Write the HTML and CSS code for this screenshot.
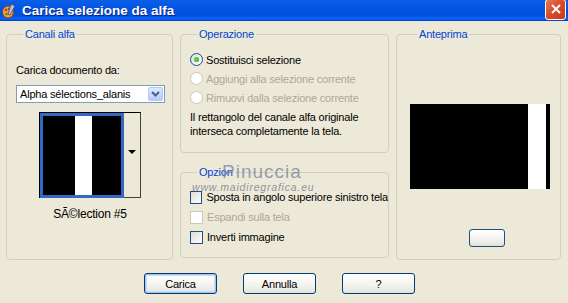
FILE: index.html
```html
<!DOCTYPE html>
<html>
<head>
    <title>Carica selezione da alfa</title>
    <link rel="stylesheet" href="styles.css">
</head>
<body>
<div class="window">
    <div class="titlebar">
        <svg class="app-icon" width="14" height="16" viewBox="0 0 14 16">
            <ellipse cx="6" cy="9" rx="5.5" ry="6" fill="#f0a040" stroke="#8a4a10" stroke-width="1"/>
            <circle cx="4" cy="7" r="1.3" fill="#e03020"/>
            <circle cx="7" cy="6" r="1.3" fill="#3060e0"/>
            <circle cx="4.5" cy="11" r="1.3" fill="#30a030"/>
            <path d="M9 1 L13 3 L8 12 L6 11 Z" fill="#c0c0d0" stroke="#404060" stroke-width="0.8"/>
        </svg>
        <span class="title">Carica selezione da alfa</span>
        <div class="close">
            <svg width="12" height="12" viewBox="0 0 12 12"><path d="M2 2 L10 10 M10 2 L2 10" stroke="#fff" stroke-width="2"/></svg>
        </div>
    </div>

    <div class="content">
        <div class="groups">
            <fieldset class="group canali">
                <legend>Canali alfa</legend>
                <div class="lbl">Carica documento da:</div>
                <div class="combo">
                    <span class="combo-text">Alpha sélections_alanis</span>
                    <span class="combo-btn">
                        <svg width="9" height="6" viewBox="0 0 9 6"><path d="M1 1 L4.5 4.5 L8 1" fill="none" stroke="#4d6185" stroke-width="2"/></svg>
                    </span>
                </div>
                <div class="thumb-wrap">
                    <div class="thumb">
                        <div class="thumb-img"><span class="stripe"></span></div>
                        <div class="thumb-arrow"><span class="tri"></span></div>
                    </div>
                    <div class="caption">SÃ©lection #5</div>
                </div>
            </fieldset>

            <div class="mid">
                <fieldset class="group operazione">
                    <legend>Operazione</legend>
                    <div class="row"><span class="radio on"></span>Sostituisci selezione</div>
                    <div class="row disabled"><span class="radio"></span>Aggiungi alla selezione corrente</div>
                    <div class="row disabled"><span class="radio"></span>Rimuovi dalla selezione corrente</div>
                    <p class="desc">Il rettangolo del canale alfa originale interseca completamente la tela.</p>
                </fieldset>
                <fieldset class="group opzioni">
                    <legend>Opzion</legend>
                    <div class="row"><span class="check"></span>Sposta in angolo superiore sinistro tela</div>
                    <div class="row disabled"><span class="check"></span>Espandi sulla tela</div>
                    <div class="row"><span class="check"></span>Inverti immagine</div>
                    <div class="wm-name">Pinuccia</div>
                    <div class="wm-url">www.maidiregrafica.eu</div>
                </fieldset>
            </div>

            <fieldset class="group anteprima">
                <legend>Anteprima</legend>
                <div class="preview"><span class="stripe"></span></div>
                <div class="zoom-btn"></div>
            </fieldset>
        </div>

        <div class="buttons">
            <button class="btn default">Carica</button>
            <button class="btn">Annulla</button>
            <button class="btn">?</button>
        </div>
    </div>
</div>
</body>
</html>
```

FILE: styles.css
```css
/* Finestra stile XP */
body {
    margin: 0;
    background: #ece9d8;
    font-family: "Liberation Sans", Arial, sans-serif;
    font-size: 11px;
    letter-spacing: -0.2px;
    color: #000;
}

.window {
    width: 568px;
    height: 303px;
    overflow: hidden;
}

.titlebar {
    height: 21px;
    display: flex;
    align-items: center;
    background: linear-gradient(to bottom, #0a5ee6 0%, #0055e5 40%, #0050dc 75%, #0a66ff 88%, #003dc8 100%);
    color: #fff;
}

.app-icon {
    margin-left: 2px;
    margin-right: 6px;
}

.title {
    font-weight: bold;
    font-size: 13.5px;
    letter-spacing: 0;
    text-shadow: 1px 1px 0 #0a1f80;
    flex: 1;
}

.close {
    width: 19px;
    height: 19px;
    margin-right: 2px;
    margin-top: -3px;
    border: 1px solid #fff;
    border-radius: 3px;
    background: linear-gradient(135deg, #e8785a 0%, #d84a28 50%, #c83a1a 100%);
    display: flex;
    align-items: center;
    justify-content: center;
}

.content {
    padding: 7px 7px 0 6px;
}

.groups {
    display: flex;
    gap: 7px;
}

.group {
    margin: 0;
    padding: 0 0 0 9px;
    border: 1px solid #d0d0bf;
    border-radius: 4px;
    box-sizing: border-box;
    min-width: 0;
}

.group legend {
    padding: 0 2px;
    margin-left: 7px;
    line-height: 13px;
    color: #0046d5;
}

/* Canali alfa */
.canali {
    width: 167px;
    height: 232px;
}

.lbl {
    margin-top: 23px;
    line-height: 13px;
}

.combo {
    margin-top: 8px;
    width: 149px;
    height: 18px;
    box-sizing: border-box;
    border: 1px solid #7f9db9;
    background: #fff;
    display: flex;
    align-items: center;
}

.combo-text {
    flex: 1;
    padding-left: 3px;
}

.combo-btn {
    width: 15px;
    height: 14px;
    margin-right: 1px;
    border: 1px solid #b4c8f4;
    border-radius: 2px;
    background: linear-gradient(to bottom, #dfe8fd, #b7cbf7);
    box-sizing: border-box;
    display: flex;
    align-items: center;
    justify-content: center;
}

.thumb-wrap {
    margin-top: 9px;
    margin-left: 23px;
    width: 102px;
}

.thumb {
    height: 86px;
    display: flex;
    border-top: 1px solid #000;
    border-left: 1px solid #000;
    box-sizing: border-box;
}

.thumb-img {
    width: 84px;
    background: #000;
    border: 3px solid #316ac5;
    box-sizing: border-box;
    position: relative;
}

.thumb-img .stripe {
    position: absolute;
    left: 32px;
    width: 17px;
    top: 0;
    bottom: 0;
    background: #fff;
}

.thumb-arrow {
    flex: 1;
    border-right: 1px solid #404040;
    border-bottom: 1px solid #404040;
    display: flex;
    align-items: center;
    justify-content: center;
}

.tri {
    width: 0;
    height: 0;
    border-left: 4px solid transparent;
    border-right: 4px solid transparent;
    border-top: 4px solid #000;
    margin-bottom: 6px;
}

.caption {
    margin-top: 10px;
    line-height: 13px;
    text-align: center;
    font-size: 12px;
}

/* Colonna centrale */
.mid {
    width: 209px;
    display: flex;
    flex-direction: column;
    gap: 13px;
}

.operazione {
    height: 125px;
}

.opzioni {
    height: 92px;
    position: relative;
}

.operazione .row:first-of-type {
    margin-top: 9px;
}

.opzioni .row:first-of-type {
    margin-top: 8px;
}

.row {
    display: flex;
    align-items: center;
    height: 19px;
    white-space: nowrap;
}

.opzioni .row {
    height: 20px;
}

.row.disabled {
    color: #aca899;
}

.radio {
    width: 11px;
    height: 11px;
    border: 1px solid #1c5180;
    border-radius: 50%;
    background: linear-gradient(135deg, #dcdcd7, #fff);
    margin-right: 3px;
    position: relative;
}

.radio.on::after {
    content: "";
    position: absolute;
    left: 3px;
    top: 3px;
    width: 5px;
    height: 5px;
    border-radius: 50%;
    background: radial-gradient(circle at 40% 40%, #5ee05e, #21a121);
}

.disabled .radio,
.disabled .check {
    border-color: #cac8bb;
    background: #fff;
}

.check {
    width: 11px;
    height: 11px;
    border: 1px solid #1c5180;
    background: linear-gradient(135deg, #dcdcd7, #fff);
    margin-right: 4px;
}

.desc {
    margin: 3px 0 0 0;
    line-height: 14px;
    width: 190px;
}

.wm-name {
    position: absolute;
    left: 41px;
    top: -18px;
    font-size: 19px;
    line-height: 22px;
    letter-spacing: 1px;
    color: rgba(120, 130, 160, 0.75);
}

.wm-url {
    position: absolute;
    left: 11px;
    top: 2px;
    font-size: 10.5px;
    line-height: 12px;
    font-style: italic;
    letter-spacing: 0.8px;
    color: rgba(120, 120, 140, 0.8);
}

/* Anteprima */
.anteprima {
    width: 165px;
    height: 232px;
    padding-left: 13px;
}

.preview {
    margin-top: 63px;
    width: 140px;
    height: 85px;
    background: #000;
    position: relative;
}

.preview .stripe {
    position: absolute;
    left: 118px;
    width: 18px;
    top: 0;
    bottom: 0;
    background: #fff;
}

.zoom-btn {
    margin-top: 40px;
    margin-left: 59px;
    width: 36px;
    height: 18px;
    box-sizing: border-box;
    border: 1px solid #1c5180;
    border-radius: 3px;
    background: linear-gradient(to bottom, #fff, #f0efea 70%, #e0ded3);
}

/* Pulsanti */
.buttons {
    display: flex;
    gap: 26px;
    margin-top: 13px;
    margin-left: 138px;
}

.btn {
    width: 73px;
    height: 21px;
    font-family: "Liberation Sans", Arial, sans-serif;
    font-size: 11px;
    letter-spacing: -0.2px;
    border: 1px solid #003c74;
    border-radius: 3px;
    background: linear-gradient(to bottom, #fff, #f3f3ef 60%, #e3e2da);
    padding: 0;
}

.btn.default {
    box-shadow: inset 0 0 0 1px #a9c2ef, inset 0 0 0 2px #cfdbf5;
}
```
